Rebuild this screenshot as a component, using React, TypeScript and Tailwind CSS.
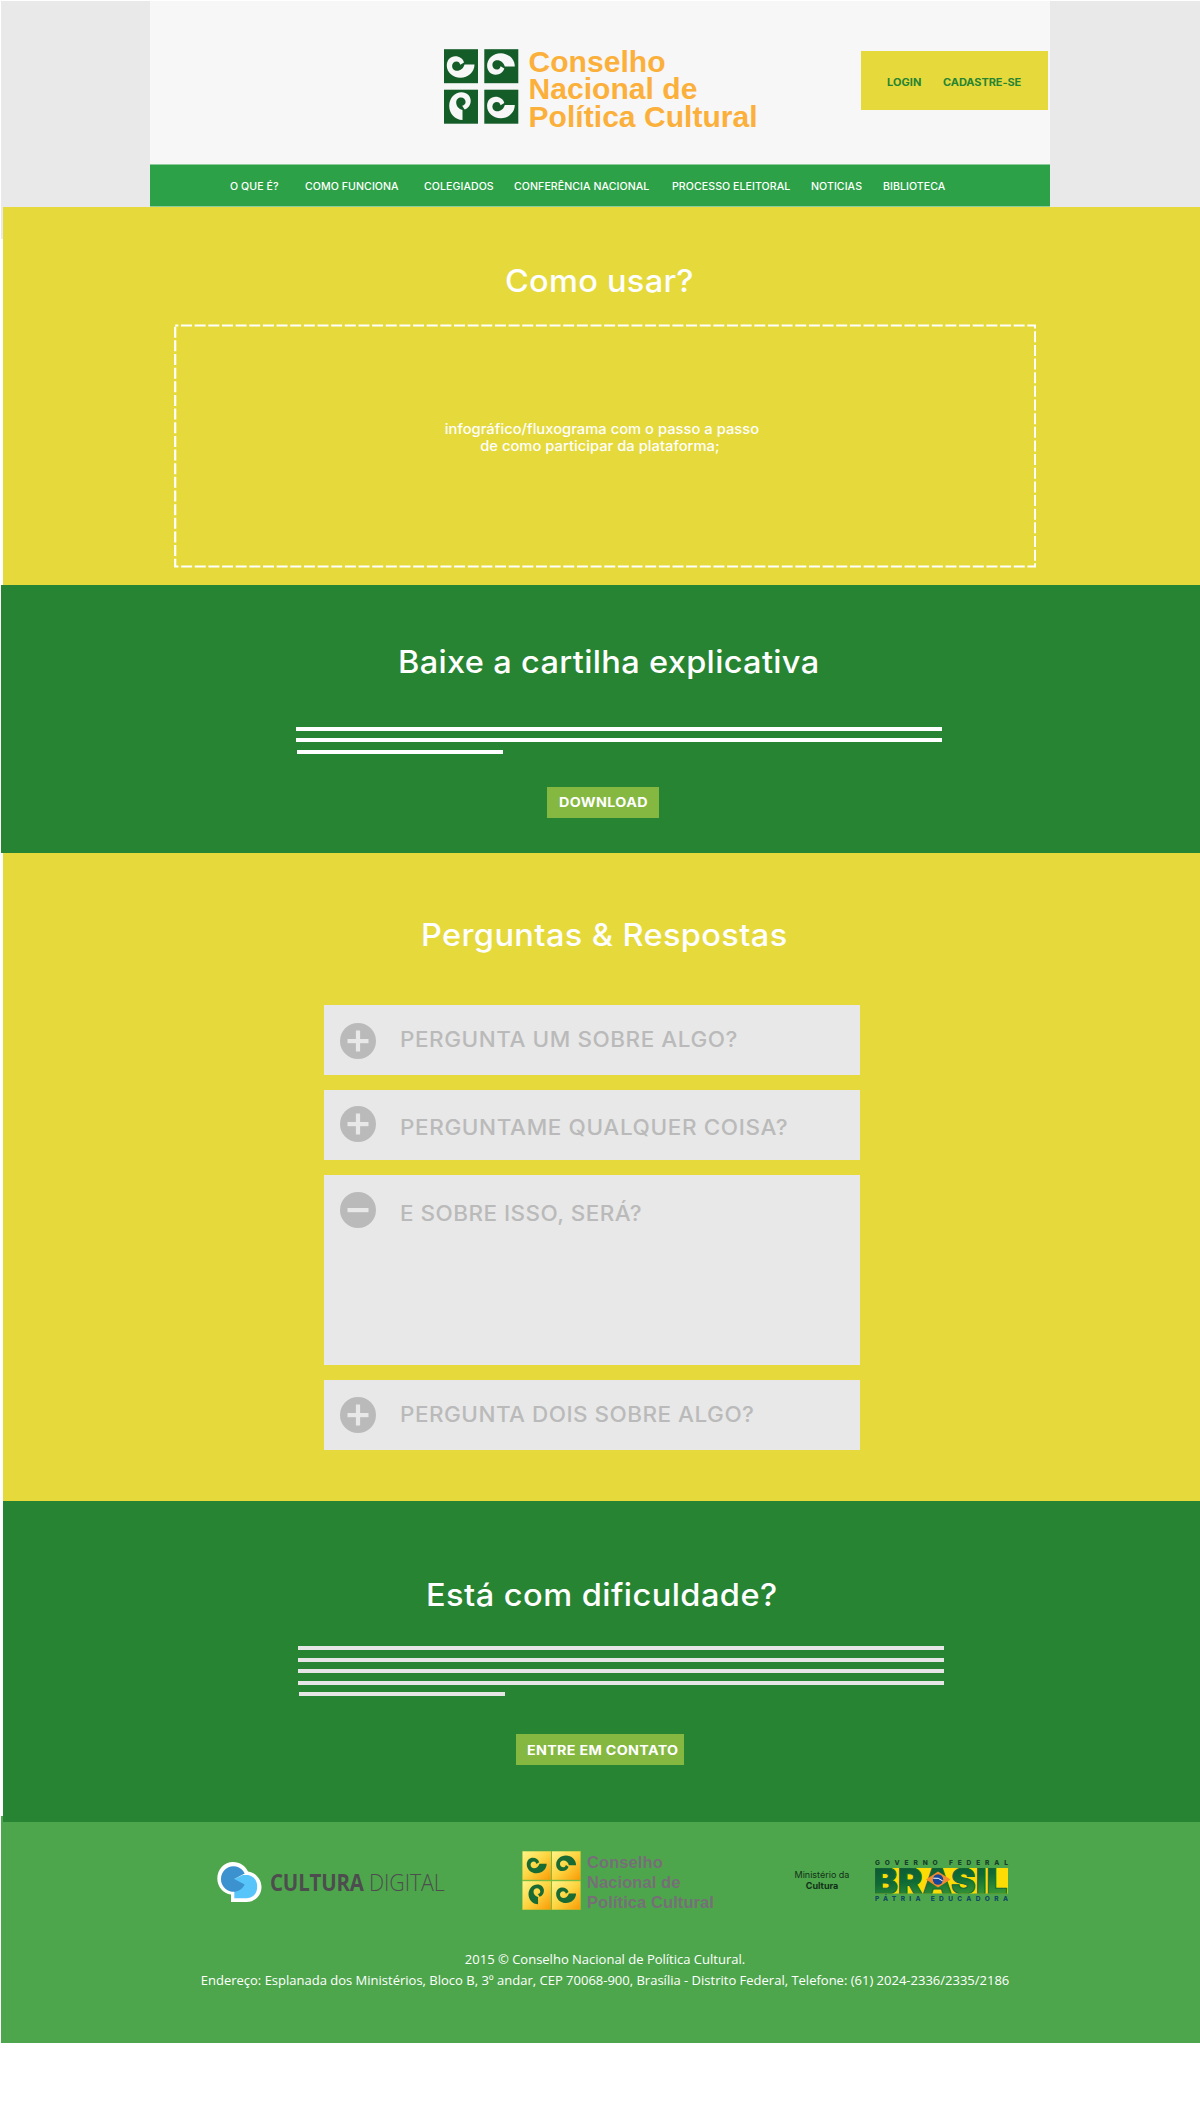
import { useId } from "react";

const SWIRL =
  "M30.5 15.5C30.5 23 24 28.8 16.5 28.8C8.5 28.8 2.8 23 2.8 16.5C2.8 11 6.5 7.3 11.3 7.3C15.5 7.3 19 9.6 20 13.4L16.3 15.8C15.8 13.6 14.4 12.4 12.6 12.4C10 12.4 8.1 14.5 8.1 17C8.1 19.8 10.2 21.8 13 21.8C16.5 21.8 19.5 19.3 20.5 15.5Z";

const TILES = [
  { x: 0, y: 0, turn: undefined },
  { x: 40.3, y: 0, turn: "matrix(1 0 0 -1 0 33)" },
  { x: 0, y: 40.5, turn: "matrix(0 1 -1 0 34 0)" },
  { x: 40.3, y: 40.5, turn: undefined },
];

function HeaderMark() {
  return (
    <svg className="h-[75px] w-[75px] shrink-0" viewBox="0 0 75 75">
      {TILES.map((t, i) => (
        <g key={i} transform={`translate(${t.x} ${t.y})`}>
          <rect y="0.2" width="34" height="34" fill="#145c28" />
          <path d={SWIRL} transform={t.turn} fill="#f7f7f7" />
        </g>
      ))}
    </svg>
  );
}

function FooterMark() {
  const id = useId();
  return (
    <svg className="mt-[1px] h-[59px] w-[59px] shrink-0" viewBox="0 0 59 59">
      <defs>
        <linearGradient id={id} x1="0" y1="0" x2="1" y2="1">
          <stop offset="0" stopColor="#fff58a" />
          <stop offset="0.5" stopColor="#fdd440" />
          <stop offset="1" stopColor="#f99a05" />
        </linearGradient>
      </defs>
      <rect width="59" height="59" fill="#7dbb3f" />
      {TILES.map((t, i) => (
        <g key={i} transform={`translate(${t.x ? 30 : 0.6} ${t.y ? 30.2 : 0.4}) scale(0.835)`}>
          <rect width="34" height="34" fill={`url(#${id})`} />
          <g transform="translate(2.6 1.4) scale(0.86)">
            <path d={SWIRL} transform={t.turn} fill="#1a6b33" />
          </g>
        </g>
      ))}
    </svg>
  );
}

function BubbleMark() {
  return (
    <svg className="mt-[12px] h-[41px] w-[45px] shrink-0" viewBox="0 0 45 41">
      <path
        d="M16 0C23 0 28.500 4 31 9.600C38.500 10.500 44.500 17 44.500 25C44.500 33.500 38 40 29.500 40H14V32.600C6.200 31.500 0.300 24.800 0.300 16.500C0.300 7.400 7.300 0 16 0Z"
        fill="#fff"
      />
      <path d="M17.300 17L26 13H29.500C36 13 40.200 18.200 40.200 24.700C40.200 31.300 36 36.300 29.500 36.300H17.300Z" fill="#58c5fa" />
      <path d="M17.300 17L27.700 11.500A12.500 12.700 0 1 0 27.700 22.500Z" fill="#3b92cf" />
    </svg>
  );
}

function BrasilMark() {
  const id = useId();
  return (
    <svg className="mt-[9px] h-[44px] w-[136px] shrink-0" viewBox="0 0 136 44">
      <defs>
        <linearGradient id={id} x1="0" y1="0" x2="0.3" y2="1">
          <stop offset="0" stopColor="#0d4f33" />
          <stop offset="0.55" stopColor="#0f6a35" />
          <stop offset="1" stopColor="#3a9a35" />
        </linearGradient>
        <clipPath id={`${id}-band`}>
          <rect x="1" y="9" width="133" height="25.500" />
        </clipPath>
      </defs>
      <text x="1" y="6.200" textLength="133" className="font-['Inter'] text-[6.600px] font-extrabold" fill="#17402b">
        GOVERNO FEDERAL
      </text>
      <rect x="1" y="9" width="133" height="25.500" fill="#fddc05" />
      <g clipPath={`url(#${id}-band)`}>
        <text
          x="-1"
          y="34.700"
          textLength="134.500"
          lengthAdjust="spacingAndGlyphs"
          className="font-['Inter'] text-[36px] font-black"
          fill={`url(#${id})`}
          stroke="#12693a"
          strokeWidth="1"
        >
          BRASIL
        </text>
      </g>
      <path d="M52 20.500L64 12.500L76.500 20.500L64 28.500Z" fill="#f58a2c" />
      <circle cx="64" cy="20.500" r="5.200" fill="#17479b" />
      <path d="M59.200 19.200Q64.500 18 68.800 22" stroke="#fff" strokeWidth="1" fill="none" />
      <text x="1" y="42.200" textLength="133" className="font-['Inter'] text-[6.600px] font-extrabold" fill="#124a63">
        PÁTRIA EDUCADORA
      </text>
    </svg>
  );
}

function ToggleIcon({ open }: { open?: boolean }) {
  return (
    <svg className="h-9 w-9 shrink-0" viewBox="0 0 36 36">
      <circle cx="18" cy="18" r="18" fill="#bababa" />
      <rect x="7.500" y="16" width="21" height="4.200" fill="#e8e8e8" />
      {!open && <rect x="15.900" y="7.500" width="4.200" height="21" fill="#e8e8e8" />}
    </svg>
  );
}

const NAV = [
  { label: "O QUE É?", cls: "w-[75.5px]" },
  { label: "COMO FUNCIONA", cls: "w-[118.5px]" },
  { label: "COLEGIADOS", cls: "w-[90.5px]" },
  { label: "CONFERÊNCIA NACIONAL", cls: "w-[157.5px]" },
  { label: "PROCESSO ELEITORAL", cls: "w-[139px]" },
  { label: "NOTICIAS", cls: "w-[72px]" },
  { label: "BIBLIOTECA", cls: "" },
];

const FAQ = [
  { q: "PERGUNTA UM SOBRE ALGO?", open: false, card: "h-[70px]", icon: "mt-[17.5px]", text: "mt-[15px] tracking-[0.52px]" },
  { q: "PERGUNTAME QUALQUER COISA?", open: false, card: "mt-[15px] h-[70px]", icon: "mt-[16px]", text: "mt-[18px] tracking-[0.59px]" },
  { q: "E SOBRE ISSO, SERÁ?", open: true, card: "mt-[15px] h-[190px]", icon: "mt-[17px]", text: "mt-[19px] tracking-[0.44px]" },
  { q: "PERGUNTA DOIS SOBRE ALGO?", open: false, card: "mt-[15px] h-[70px]", icon: "mt-[17px]", text: "mt-[15px] tracking-[0.46px]" },
];

export default function App() {
  return (
    <div className="w-[1200px] bg-white font-['Inter',sans-serif] font-medium text-white whitespace-nowrap">
      <header className="flex h-[207px] bg-[#e9e9e9] border-t border-l border-white">
        <div className="ml-[149px] w-[900px] bg-[#f7f7f7]">
          <div className="flex h-[163px] items-start">
            <div className="ml-[294px] mt-[48px]">
              <HeaderMark />
            </div>
            <div className="ml-[9.5px] mt-[46.5px] w-[240px] font-['Liberation_Sans',sans-serif] text-[30px] font-bold leading-[27.6px] tracking-[0.05px] text-[#fbb03b]">
              <div>Conselho</div>
              <div>Nacional de</div>
              <div>Política Cultural</div>
            </div>
            <div className="ml-auto mr-[2px] mt-[50px] flex h-[59px] w-[187px] bg-[#e5d93b] pl-[25.5px] pt-[3px] text-[10px] font-bold leading-[56px] text-[#268433]">
              <a className="w-[56px] origin-left scale-x-110 tracking-[0.07px]">
                <span className="block w-0">LOGIN</span>
              </a>
              <a className="origin-left scale-x-110 tracking-[-0.07px]">CADASTRE-SE</a>
            </div>
          </div>
          <nav className="flex h-[43px] items-center border-y border-[#8fcc9c] bg-[#2da147] pl-[79.5px] pt-px text-[10px] tracking-[0.05px]">
            {NAV.map((n) => (
              <a key={n.label} className={n.cls}>
                <span className="block w-0 origin-left">
                  <span className="inline-block origin-left scale-x-[1.06]">{n.label}</span>
                </span>
              </a>
            ))}
          </nav>
        </div>
      </header>

      <section className="relative ml-[3px] h-[378px] bg-[#e5d93b] pt-[54px]">
        <div className="absolute -left-[2px] top-0 h-8 w-[2px] bg-[#e9e9e9]" />
        <h1 className="ml-[502px] origin-left scale-x-105 text-[31px] leading-[40px] tracking-[0.24px] w-[180px]">Como usar?</h1>
        <div className="relative ml-[171px] mt-[23px] h-[244px] w-[862px] pt-[96px]">
          <svg className="absolute inset-0 h-full w-full" viewBox="0 0 862 244">
            <rect
              x="1.200"
              y="1.500"
              width="860"
              height="241"
              fill="none"
              stroke="#fff"
              strokeWidth="2.200"
              strokeDasharray="11 2.650"
              strokeDashoffset="-5.800"
            />
          </svg>
          <p className="w-[856px] scale-x-105 text-center text-[14px] leading-[17px] tracking-[0.03px]">
            infográfico/fluxograma com o passo a passo
            <br />
            <span className="relative -left-[2px]">de como participar da plataforma;</span>
          </p>
        </div>
      </section>

      <section className="ml-px h-[268px] bg-[#268433] pt-[57px]">
        <h2 className="ml-[396.5px] w-[402px] origin-left scale-x-105 text-[31px] leading-[40px] tracking-[0.31px]">
          Baixe a cartilha explicativa
        </h2>
        <div className="ml-[295px] mt-[45px] h-[27px]">
          <div className="h-[4px] w-[646px] bg-white" />
          <div className="mt-[7px] h-[4px] w-[646px] bg-white" />
          <div className="ml-px mt-[8px] h-[4px] w-[206px] bg-white" />
        </div>
        <button className="ml-[546px] mt-[33px] block h-[31px] w-[112px] bg-[#84b840] pl-[12px] text-left text-[13px] font-bold leading-[31px] tracking-[0.35px]">
          <span className="inline-block origin-left scale-x-110">DOWNLOAD</span>
        </button>
      </section>

      <section className="ml-[3px] h-[648px] bg-[#e5d93b] pt-[62px]">
        <h2 className="ml-[418px] w-[350px] origin-left scale-x-105 text-[31px] leading-[40px] tracking-[0.35px]">
          Perguntas &amp; Respostas
        </h2>
        <div className="ml-[321px] mt-[50px] w-[536px]">
          {FAQ.map((f) => (
            <div key={f.q} className={`flex items-start bg-[#e8e8e8] pl-[15.5px] text-[#bababa] ${f.card}`}>
              <div className={f.icon}>
                <ToggleIcon open={f.open} />
              </div>
              <div className={`ml-[24.5px] origin-left scale-x-[1.07] text-[21px] leading-[40px] ${f.text}`}>{f.q}</div>
            </div>
          ))}
        </div>
      </section>

      <section className="relative ml-[3px] h-[321px] bg-[#268433] pt-[74px]">
        <div className="absolute -left-[2px] bottom-0 h-[6px] w-[2px] bg-[#4ea64c]" />
        <h2 className="ml-[422.5px] w-[336px] origin-left scale-x-105 text-[31px] leading-[40px] tracking-[0.43px]">
          Está com dificuldade?
        </h2>
        <div className="ml-[295px] mt-[31px] flex h-[50px] flex-col justify-between">
          <div className="h-[4px] w-[646px] bg-[#e6e6e6]" />
          <div className="h-[4px] w-[646px] bg-[#e6e6e6]" />
          <div className="h-[4px] w-[646px] bg-[#e6e6e6]" />
          <div className="h-[4px] w-[646px] bg-[#e6e6e6]" />
          <div className="ml-px h-[4px] w-[206px] bg-[#e6e6e6]" />
        </div>
        <button className="ml-[513px] mt-[38px] block h-[31px] w-[168px] bg-[#84b840] pl-[10.5px] text-left text-[13px] font-bold leading-[32px] tracking-[0.29px]">
          <span className="inline-block origin-left scale-x-110">ENTRE EM CONTATO</span>
        </button>
      </section>

      <footer className="ml-px h-[221px] bg-[#4ea64c] pt-[28px]">
        <div className="flex h-[99px] items-start">
          <div className="ml-[216px]">
            <BubbleMark />
          </div>
          <div className="ml-[7.5px] mt-[15px] flex w-[252.5px] font-['Open_Sans',sans-serif] text-[23px] leading-[34px] text-[#4d4d4f]">
            <span className="w-[99.5px] origin-left scale-x-[0.89] font-bold tracking-[-0.2px]">
              <span className="block w-0">CULTURA</span>
            </span>
            <span className="origin-left scale-x-[0.93] font-light tracking-[-0.1px]">DIGITAL</span>
          </div>
          <FooterMark />
          <div className="ml-[6px] w-[207px] pt-[2px] font-['Liberation_Sans',sans-serif] text-[16.500px] font-bold leading-[20px] tracking-[0.08px] text-[#766f78]">
            <div>Conselho</div>
            <div>Nacional de</div>
            <div>Política Cultural</div>
          </div>
          <div className="mt-[20px] w-[56px] text-center text-[9px] font-normal leading-[10.500px] text-[#123019]">
            Ministério da
            <div className="font-bold">Cultura</div>
          </div>
          <div className="ml-[24px]">
            <BrasilMark />
          </div>
        </div>
        <div className="w-[1208px] text-center font-['Open_Sans',sans-serif] text-[13px] font-normal leading-[21px]">
          <p>2015 © Conselho Nacional de Política Cultural.</p>
          <p>
            Endereço: Esplanada dos Ministérios, Bloco B, 3º andar, CEP 70068-900, Brasília - Distrito Federal,
            Telefone: (61) 2024-2336/2335/2186
          </p>
        </div>
      </footer>
      <div className="h-[67px]" />
    </div>
  );
}
